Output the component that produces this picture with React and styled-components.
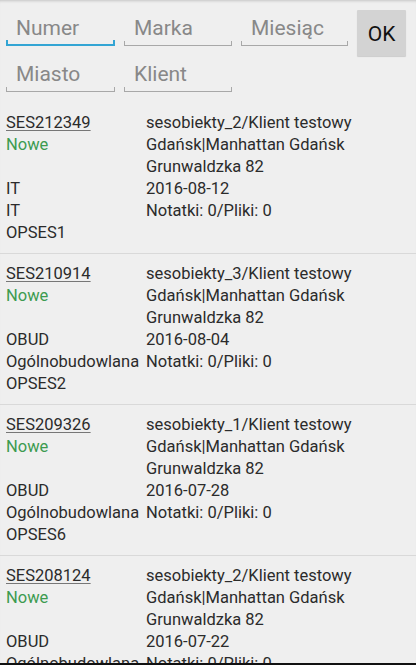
import React from 'react';
import styled, { createGlobalStyle } from 'styled-components';

const GlobalStyle = createGlobalStyle`
  html, body {
    margin: 0;
    padding: 0;
    background: #efefef;
  }
  body {
    font-family: Roboto, "Noto Sans", "DejaVu Sans", sans-serif;
  }
`;

const orders = [
  { num: 'SES212349', obj: 'sesobiekty_2/Klient testowy', date: '2016-08-12', type: 'IT', kind: 'IT', op: 'OPSES1' },
  { num: 'SES210914', obj: 'sesobiekty_3/Klient testowy', date: '2016-08-04', type: 'OBUD', kind: 'Ogólnobudowlana', op: 'OPSES2' },
  { num: 'SES209326', obj: 'sesobiekty_1/Klient testowy', date: '2016-07-28', type: 'OBUD', kind: 'Ogólnobudowlana', op: 'OPSES6' },
  { num: 'SES208124', obj: 'sesobiekty_2/Klient testowy', date: '2016-07-22', type: 'OBUD', kind: 'Ogólnobudowlana', op: 'OPSES3' },
];

const Screen = styled.div`
  height: 665px;
  box-sizing: border-box;
  overflow: hidden;
  border-bottom: 2px solid #111;
  box-shadow: inset 0 3px 3px -2px rgba(0, 0, 0, 0.18);
`;

const Filters = styled.div`
  display: grid;
  grid-template-columns: 109px 108px 107px 49px;
  grid-template-rows: 46px 36px;
  column-gap: 9px;
  align-items: start;
  padding: 10px 0 0 6px;
  height: 103px;
  box-sizing: border-box;
`;

const Field = styled.div`
  position: relative;
  height: 36px;
  box-sizing: border-box;
  padding: 6px 0 0 10px;
  font-size: 21px;
  line-height: 24px;
  color: #888;
  border-bottom: ${(p) => (p.$focused ? '2px solid #33a5d4' : '1px solid #a8a8a8')};

  &::before,
  &::after {
    content: '';
    position: absolute;
    bottom: 0;
    width: ${(p) => (p.$focused ? '2px' : '1px')};
    height: 4px;
    background: ${(p) => (p.$focused ? '#33a5d4' : '#a8a8a8')};
  }
  &::before {
    left: 0;
  }
  &::after {
    right: 0;
  }
`;

const OkButton = styled.button`
  height: 46px;
  width: 49px;
  border: none;
  border-radius: 1px;
  background: #d3d3d3;
  box-shadow: 0 1px 1px rgba(0, 0, 0, 0.15);
  font-family: inherit;
  font-size: 21px;
  color: #111;
  padding: 2px 0 0;
`;

const List = styled.div`
  display: flex;
  flex-direction: column;
`;

const Item = styled.div`
  display: grid;
  grid-template-columns: 140px 1fr;
  grid-auto-rows: 22px;
  padding: 9px 6px 9px;
  border-bottom: 1px solid #d9d9d9;
  font-size: 16.5px;
  line-height: 22px;
  color: #2b2b2b;
  white-space: nowrap;
`;

const Cell = styled.div`
  color: ${(p) => (p.$status ? '#3d9b50' : '#2b2b2b')};
  text-decoration: ${(p) => (p.$link ? 'underline' : 'none')};
  text-decoration-color: #777;
  text-underline-offset: 2px;
`;

const OrderItem = ({ o }) => (
  <Item>
    <Cell $link>{o.num}</Cell>
    <Cell>{o.obj}</Cell>
    <Cell $status>Nowe</Cell>
    <Cell>Gdańsk|Manhattan Gdańsk</Cell>
    <Cell />
    <Cell>Grunwaldzka 82</Cell>
    <Cell>{o.type}</Cell>
    <Cell>{o.date}</Cell>
    <Cell>{o.kind}</Cell>
    <Cell>Notatki: 0/Pliki: 0</Cell>
    <Cell>{o.op}</Cell>
    <Cell />
  </Item>
);

export default function App() {
  return (
    <>
      <GlobalStyle />
      <Screen>
        <Filters>
          <Field $focused>Numer</Field>
          <Field>Marka</Field>
          <Field>Miesiąc</Field>
          <OkButton>OK</OkButton>
          <Field>Miasto</Field>
          <Field>Klient</Field>
        </Filters>
        <List>
          {orders.map((o) => (
            <OrderItem key={o.num} o={o} />
          ))}
        </List>
      </Screen>
    </>
  );
}
